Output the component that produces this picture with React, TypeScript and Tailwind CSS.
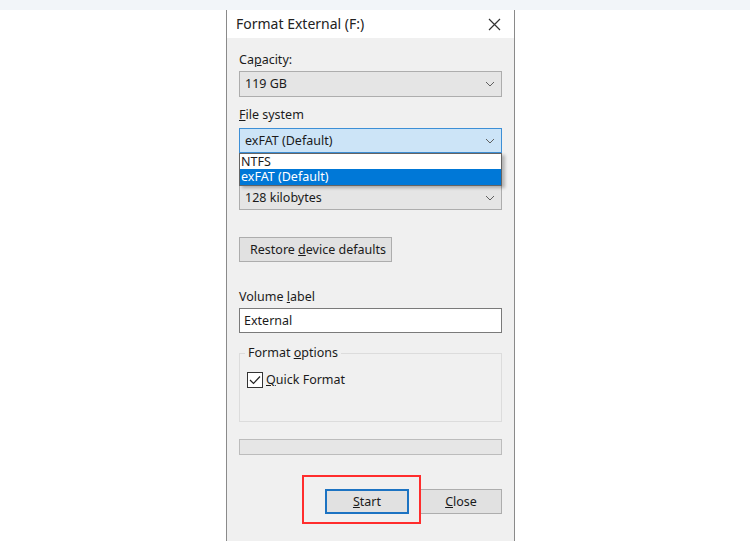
const font = { fontFamily: '"Noto Sans", "Open Sans", sans-serif' };

function Chevron() {
  return (
    <svg width="10" height="6" viewBox="0 0 10 6" className="shrink-0">
      <path d="M1 1 L5 5 L9 1" fill="none" stroke="#606060" strokeWidth="1" />
    </svg>
  );
}

function Combo({
  value,
  focused,
  className = "",
}: {
  value: string;
  focused?: boolean;
  className?: string;
}) {
  return (
    <div
      className={`flex h-[25px] items-center justify-between border pl-[5px] pr-[6px] ${
        focused
          ? "border-[#3d8fd6] bg-[#cce4f7]"
          : "border-[#adadad] bg-[#e5e5e5]"
      } ${className}`}
    >
      <span>{value}</span>
      <Chevron />
    </div>
  );
}

export default function App() {
  return (
    <div
      className="h-[541px] w-[750px] overflow-hidden bg-white text-[12.5px] leading-4 text-[#1b1b1b]"
      style={font}
    >
      <div className="h-[10px] bg-[#f2f5f9]" />
      <div className="ml-[226px] flex h-[531px] w-[289px] flex-col border-x border-[#8a8a8a] bg-[#f0f0f0]">
        {/* title bar */}
        <div className="flex h-[28px] items-center justify-between bg-white pl-[9px] pr-[13px]">
          <span className="text-[14px] text-[#222]">Format External (F:)</span>
          <svg width="13" height="13" viewBox="0 0 13 13">
            <path d="M1 1 L12 12 M12 1 L1 12" stroke="#333" strokeWidth="1.2" />
          </svg>
        </div>

        <div className="flex flex-col px-[12px]">
          <div className="mt-[14px]">
            Ca<span className="underline">p</span>acity:
          </div>
          <Combo value="119 GB" className="mt-[3px] h-[26px]" />

          <div className="mt-[10px]">
            <span className="underline">F</span>ile system
          </div>
          <div className="relative mt-[5px]">
            <Combo value="exFAT (Default)" focused />
            <div className="absolute left-0 right-0 top-[25px] z-10 flex flex-col border border-[#646464] bg-white shadow-[3px_2px_3px_rgba(0,0,0,0.25)]">
              <div className="flex h-[15px] items-center pl-[1px]">NTFS</div>
              <div className="flex h-[16px] items-center bg-[#0078d7] pl-[1px] text-white">
                exFAT (Default)
              </div>
            </div>
          </div>

          <Combo value="128 kilobytes" className="mt-[32px]" />

          <button className="mt-[27px] h-[25px] w-[153px] border border-[#adadad] bg-[#e1e1e1] text-left pl-[10px]">
            Restore <span className="underline">d</span>evice defaults
          </button>

          <div className="mt-[27px]">
            Volume <span className="underline">l</span>abel
          </div>
          <div className="mt-[3px] flex h-[25px] items-center border border-[#7a7a7a] bg-white pl-[4px]">
            External
          </div>

          <div className="relative mt-[20px] h-[69px] border border-[#dcdcdc]">
            <span className="absolute left-[5px] top-[-9px] bg-[#f0f0f0] px-[3px]">
              Format <span className="underline">o</span>ptions
            </span>
            <div className="ml-[7px] mt-[18px] flex items-center gap-[3px]">
              <div className="flex h-[16px] w-[16px] items-center justify-center border border-[#333] bg-white">
                <svg width="12" height="10" viewBox="0 0 12 10">
                  <path d="M1 5 L4.5 8.5 L11 1.5" fill="none" stroke="#222" strokeWidth="1.2" />
                </svg>
              </div>
              <span>
                <span className="underline">Q</span>uick Format
              </span>
            </div>
          </div>

          <div className="mt-[17px] h-[16px] border border-[#bcbcbc] bg-[#e6e6e6]" />

          <div className="mt-[34px] flex justify-end gap-[11px]">
            <div className="relative">
              <span className="absolute left-[-23px] right-[-12px] top-[-14px] bottom-[-10px] border-2 border-[#ff2d2d]" />
              <button className="relative flex h-[25px] w-[84px] items-center justify-center border-2 border-[#1c73c2] bg-[#e1e1e1]">
                <span>
                  <span className="underline">S</span>tart
                </span>
              </button>
            </div>
            <button className="flex h-[25px] w-[82px] items-center justify-center border border-[#adadad] bg-[#e1e1e1]">
              <span>
                <span className="underline">C</span>lose
              </span>
            </button>
          </div>
        </div>
      </div>
    </div>
  );
}
